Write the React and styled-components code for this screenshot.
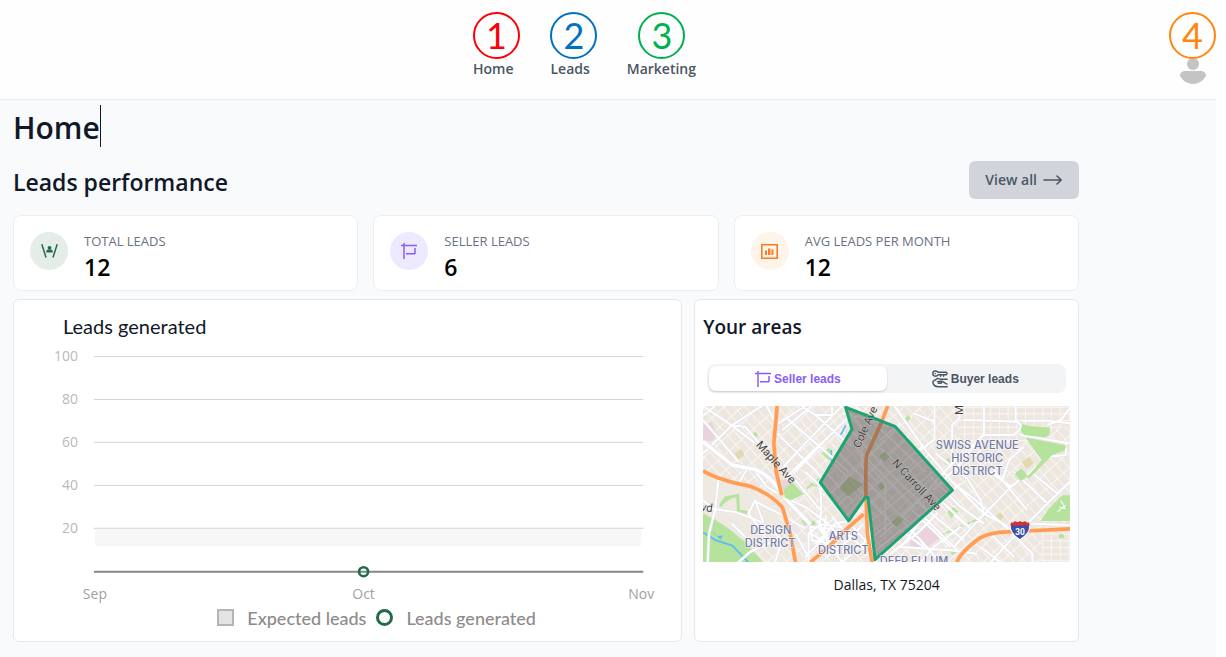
import React, { useState } from "react";
import styled, { createGlobalStyle } from "styled-components";

const GlobalStyle = createGlobalStyle`
  * {
    box-sizing: border-box;
  }
  body {
    margin: 0;
    background-color: #fff;
    font-family: "Open Sans", "Noto Sans", sans-serif;
    color: #111827;
  }
  h1, h2, h3, p, dl, dt, dd {
    margin: 0;
  }
  button {
    border: 0;
    cursor: pointer;
  }
`;

const Page = styled.div`
  min-height: 100vh;
  margin-right: 10px;
  background-color: #f9fafc;
`;

const Header = styled.header`
  display: flex;
  height: 100px;
  padding-top: 59px;
  background-color: #fefefe;
  border-bottom: 1px solid #eeeeee;
`;
const Nav = styled.nav`
  display: flex;
  flex: 1;
  justify-content: center;
  align-items: flex-start;
  gap: 37px;
`;
const NavLink = styled.a`
  position: relative;
  color: #4b5563;
  font-size: 14px;
  font-weight: 600;
  line-height: 20px;
  text-decoration: none;
`;
const Step = styled.span`
  position: absolute;
  bottom: 100%;
  left: ${(props) => (props.$centered ? "calc(50% - 23px)" : "0")};
  width: 47px;
  height: 47px;
  border: 2px solid ${(props) => props.$color};
  border-radius: 50%;
  color: ${(props) => props.$color};
  font-family: Lato, sans-serif;
  font-size: 36px;
  font-weight: 400;
  line-height: 43px;
  text-align: center;
`;
const Account = styled.a`
  position: relative;
  width: 47px;

  & svg {
    display: block;
    margin: 0 auto;
  }
`;

const Main = styled.main`
  padding: 5px 137px 15px 13px;
`;
const Title = styled.h1`
  width: fit-content;
  padding-top: 3px;
  border-right: 1px solid #111827;
  font-size: 30px;
  font-weight: 600;
  line-height: 39px;
`;
const SectionHead = styled.div`
  display: flex;
  justify-content: space-between;
  align-items: center;
  margin: 14px 0 16px;
`;
const SectionTitle = styled.h2`
  padding-top: 3px;
  font-size: 23px;
  font-weight: 600;
  line-height: 32px;
`;
const ViewAll = styled.button`
  display: flex;
  align-items: center;
  gap: 6px;
  height: 38px;
  padding: 0 16px 2px;
  border-radius: 6px;
  background-color: #d1d5db;
  color: #4b5563;
  font-family: inherit;
  font-size: 14px;
  font-weight: 600;
`;

const Stats = styled.dl`
  display: grid;
  grid-template-columns: repeat(3, minmax(0, 1fr));
  gap: 15px;
`;
const StatCard = styled.div`
  display: flex;
  gap: 16px;
  height: 76px;
  padding: 16px;
  border: 1px solid #eceef1;
  border-radius: 8px;
  background-color: #fff;
`;
const StatIcon = styled.span`
  display: flex;
  align-items: center;
  justify-content: center;
  width: 38px;
  height: 38px;
  border-radius: 50%;
  background-color: ${(props) => props.$tint};
`;
const StatLabel = styled.dt`
  color: #6b7280;
  font-size: 13px;
  font-weight: 500;
  line-height: 19px;
  text-transform: uppercase;
`;
const StatValue = styled.dd`
  color: #000;
  font-size: 23px;
  font-weight: 600;
  line-height: 32px;
`;

const Panels = styled.div`
  display: grid;
  grid-template-columns: minmax(0, 40fr) minmax(0, 23fr);
  gap: 12px;
  margin-top: 8px;
`;
const Panel = styled.section`
  padding: 13px 0 11px;
  border: 1px solid #e5e7eb;
  border-radius: 6px;
  background-color: #fff;
`;
const ChartTitle = styled.h3`
  padding-left: 49px;
  font-family: Lato, sans-serif;
  font-size: 20px;
  font-weight: 400;
  line-height: 27px;
`;
const Chart = styled.svg`
  display: block;
  width: 100%;
  font-family: "Open Sans", sans-serif;
  font-size: 14px;
`;
const Legend = styled.div`
  display: flex;
  justify-content: center;
  gap: 10px;
  padding-left: 58px;
  color: #8e8a8a;
  font-family: Lato, sans-serif;
  font-size: 18px;
  font-weight: 500;
  line-height: 24px;
`;
const LegendItem = styled.span`
  display: flex;
  align-items: center;
  gap: 13px;
`;
const LegendSquare = styled.i`
  width: 17px;
  height: 17px;
  border: 2px solid #b5b5b5;
  background-color: #e4e4e4;
`;
const LegendRing = styled.i`
  width: 17px;
  height: 17px;
  border: 3px solid #226b4a;
  border-radius: 50%;
`;

const AreasPanel = styled(Panel)`
  padding-left: 8px;
  padding-right: 8px;
`;
const AreasTitle = styled.h3`
  font-size: 19px;
  font-weight: 600;
  line-height: 28px;
`;
const Tabs = styled.div`
  display: grid;
  grid-template-columns: 1fr 1fr;
  height: 29px;
  margin: 23px 4px 13px;
  padding: 2px;
  border-radius: 8px;
  background-color: #f3f4f6;
`;
const Tab = styled.button`
  display: flex;
  align-items: center;
  justify-content: center;
  gap: 3px;
  padding: 0;
  border-radius: 7px;
  background-color: ${(props) => (props.$active ? "#fff" : "transparent")};
  box-shadow: ${(props) =>
    props.$active ? "0 1px 2px rgba(0, 0, 0, 0.18)" : "none"};
  color: ${(props) => (props.$active ? "#8b5cf6" : "#4b5563")};
  font-family: "Liberation Sans", Arial, sans-serif;
  font-size: 12px;
  font-weight: 700;
`;
const Map = styled.svg`
  display: block;
  width: 100%;
  font-family: Roboto, sans-serif;
`;
const Caption = styled.p`
  margin-top: 13px;
  font-size: 14px;
  line-height: 20px;
  text-align: center;
`;

const SignIcon = () => (
  <svg width="16" height="16" viewBox="0 0 16 16" fill="none" stroke="#8b5cf6" strokeWidth="1.5">
    <path d="M3 0v16M0 2.6h16M14 5v6M14 10.8H5" />
  </svg>
);

const PeopleIcon = () => (
  <svg width="17" height="16" viewBox="0 0 17 16" fill="#226b4a">
    <path d="M.8 1.2l4.2 13.2M16.2 1.2L12 14.4" stroke="#226b4a" strokeWidth="1.5" />
    <circle cx="8.5" cy="4.8" r="1.9" />
    <path d="M5.3 9.4V7.6l1.6-1h3.2l1.6 1v1.8z" />
  </svg>
);

const ReportIcon = () => (
  <svg width="17" height="15" viewBox="0 0 17 15" fill="#f97b22">
    <path d="M.8.8h15.4v13.4H.8z" fill="none" stroke="#f97b22" strokeWidth="1.6" />
    <path d="M4 6.5h2V11H4zM7 4.5h2.4V11H7zM10.4 5.5h2V11h-2z" />
  </svg>
);

const KeyIcon = () => (
  <svg width="16" height="18" viewBox="0 0 16 18" fill="none" stroke="#4b5563" strokeWidth="1.4" strokeLinecap="round" strokeLinejoin="round">
    <path d="M6 2.2C5.2 1.4 4.4 1 3.4 1 1.8 1 .8 2.2.8 3.6s1 2.6 2.6 2.6c1 0 2-.4 2.6-1.4h8.2l1-1.2-1-1.4z" />
    <path d="M3.2 3.6h.3M8.6 5v1.2M11.6 5v1.2" />
    <path d="M15.2 9.2H8.4L5.6 8.4 1 11.4v2.2c1 1.8 2.6 3.2 4.8 3.2h9.4" />
    <path d="M5.4 11.6l3.4-.4c1.2.2 1.4 1.6.2 2H6.2M9.6 11.2c2 .2 3.4 2.6 5.4 2.8" />
  </svg>
);

const ArrowIcon = () => (
  <svg width="20" height="12" viewBox="0 0 20 12" fill="none" stroke="#4b5563" strokeWidth="1.6" strokeLinecap="round" strokeLinejoin="round">
    <path d="M1 7h17M14 3l4.2 4L14 11" />
  </svg>
);

const navItems = [
  { label: "Home", step: 1, color: "#fb0007" },
  { label: "Leads", step: 2, color: "#0070c0" },
  { label: "Marketing", step: 3, color: "#00b050", centered: true },
];

const stats = [
  { label: "Total leads", value: 12, tint: "#e4ede7", icon: <PeopleIcon /> },
  { label: "Seller leads", value: 6, tint: "#ede9fe", icon: <SignIcon /> },
  { label: "Avg leads per month", value: 12, tint: "#fff4ea", icon: <ReportIcon /> },
];

const gridLines = [
  { value: 100, y: 16 },
  { value: 80, y: 59 },
  { value: 60, y: 102 },
  { value: 40, y: 145 },
  { value: 20, y: 188 },
];

const months = [
  { name: "Sep", x: 81 },
  { name: "Oct", x: 350 },
  { name: "Nov", x: 628 },
];

const LeadsChart = () => (
  <Chart viewBox="0 0 668 266" role="img" aria-label="Leads generated by month">
    <rect x="81" y="189" width="547" height="17" fill="#f7f7f7" />
    {gridLines.map((line) => (
      <g key={line.value}>
        <path d={`M80 ${line.y + 0.5}H630`} stroke="#d3d3d3" />
        <text x="64" y={line.y + 5} textAnchor="end" fill="#b9b9b9">
          {line.value}
        </text>
      </g>
    ))}
    <path d="M80 232H630" stroke="#868686" strokeWidth="2" />
    <circle cx="350" cy="232" r="4.5" fill="none" stroke="#226b4a" strokeWidth="2.6" />
    {months.map((month) => (
      <text key={month.name} x={month.x} y="259" textAnchor="middle" fill="#a3a0a0">
        {month.name}
      </text>
    ))}
  </Chart>
);

// west half of the street network
const westStreets = `
  M200 18L110 76L40 145L24 160M24 18L110 76L150 80L195 132L215 140
  M60 18L24 48M110 76L180 130M215 18L236 60M24 60L50 90L130 185
  M70 240L60 330L42 400L38 486M24 322L120 335L205 368M60 330L24 300
  M178 302L255 342L330 385M205 368L180 300L160 340L185 372L215 420
  M250 70L330 18M245 100L360 210L378 232M275 55L460 215M318 18L360 45L410 45V18
  M262 90L350 18M360 45L470 140M440 18L330 130L265 200M470 40L390 120L300 215
  M270 235L340 165L400 110M300 240L375 330M330 215L400 280M375 247L378 330L372 385
  M265 290L330 320L400 370M340 486V400L375 372L435 380M372 385L410 440L440 486
  M350 400L430 460M360 430L420 370L460 362M330 470L400 400M392 345L384 420
  M345 380L410 385L430 410L410 430L350 420ZM365 360L415 445M300 400L345 480
  M130 486L165 455L240 420M240 486L260 420L215 375M110 370L160 420M430 330L490 400L520 430
  M410 350L455 400L510 450M395 470L460 420L500 375M440 486L515 420M160 200L130 250L70 240
  M180 212L215 260L250 280
`;
const centreStreets = `
  M470 95L560 195L690 320M455 115L545 205L660 325M430 160L600 330L650 375
  M395 220L470 300M415 190L600 380M405 280L480 210L560 130L600 90
  M430 315L520 220L640 110M455 345L520 270L680 140M515 320L700 165
  M518 370L725 205M525 415L750 235M535 455L770 270M470 45L540 130L620 200L735 305
  M480 18L600 130L690 215M440 40L530 60L580 80M500 120V200L540 240M480 150L570 250V400
`;
// east half, drawn in its own coordinate space
const eastStreets = `
  M42 18L75 65L135 150L215 245L285 300L420 420M162 18V118M310 18V100L240 190L160 270
  M405 18V60L425 80L400 105H310L215 190M425 80L410 65L340 62L250 60M420 105L540 125L567 130
  M162 65L100 40M162 118L120 150M237 18V55L215 75V190L110 305L60 355L0 410
  M567 25L540 60L500 75M425 62H500L567 70M555 130V165L500 170L450 215L390 260L270 385L220 440
  M365 240L385 180L430 140M215 245L310 340L300 300L260 235L165 160M310 340L375 375L410 415L455 460V486
  M567 245L510 300L440 370L380 430L330 486M440 370L567 375M400 215L500 310M450 215L530 280
  M340 210L440 330M390 260L330 215M270 385L180 300L130 350L230 450M180 300L240 250
  M60 355L120 420L180 486M90 325L210 440M110 305L250 420M0 440L60 390L130 440
  M30 460L110 400L170 340M270 385L220 345M300 440L360 486M330 400L400 470
  M150 230L240 320L310 370M240 380L160 440L120 486M60 440L210 450L290 460M0 120L60 70M130 350L70 430
`;

const AreaMap = () => (
  <Map viewBox="24 18 1098 468" role="img" aria-label="Map of Dallas, TX 75204">
    <defs>
      <pattern id="blocks" width="24" height="36" patternUnits="userSpaceOnUse" patternTransform="rotate(-42)">
        <path d="M0 1H24M1 0V36" stroke="#faf8f5" strokeWidth="3" fill="none" />
      </pattern>
      <pattern id="avenues" width="26" height="20" patternUnits="userSpaceOnUse">
        <path d="M0 1H26M1 0V20" stroke="#faf8f5" strokeWidth="3" fill="none" />
      </pattern>
    </defs>
    <rect x="24" y="18" width="1098" height="468" fill="#ede7df" />
    <rect x="24" y="18" width="1098" height="468" fill="url(#blocks)" />
    <path d="M792 18H1125V70L990 125H792zM1035 400H1125V486H1035z" fill="#ede7df" />
    <path d="M792 18H1125V70L990 125H792zM1035 400H1125V486H1035z" fill="url(#avenues)" />
    <path d="M24 225L160 262L240 320L270 400L180 440L24 330z" fill="#eee9e1" />

    <g fill="#b5e39c">
      <path d="M24 340L60 358L100 385L150 425L205 486H24z" />
      <path d="M172 102l8-8 9 12-9 8zM380 160l22-18 12 30-14 8zM318 362l12-8 12 14-12 8zM345 365l12-6 5 12-10 6z" />
      <path d="M1100 285H1125V362H1035L1060 325z" />
      <path d="M755 335l18-15 15 14-20 20zM746 185l14-12 5 14-14 8zM626 62l10-17 9 8-9 14zM1090 402h14v12h-14zM763 452l12-6 8 12-12 6z" />
    </g>
    <path d="M76 318L92 293L128 286L130 330L158 338M105 292L78 310" fill="none" stroke="#b5e39c" strokeWidth="9" />
    <path d="M335 265L372 235M345 250L365 258M700 420L875 345" fill="none" stroke="#b5e39c" strokeWidth="5" strokeDasharray="24 4" />
    <g fill="#ead3dc">
      <path d="M24 75L50 66L66 100L50 125L24 118zM250 248L272 235L284 250L262 272z" />
      <path d="M640 412L688 374L735 412L685 450L645 440z" />
    </g>
    <path d="M118 160l20-15 10 18-18 16zM278 140l10-6 8 8-10 8zM900 348l14-12 12 14-14 12z" fill="#e3d9b0" />
    <g fill="none" stroke="#62bff0">
      <path d="M24 396L62 420L112 436L160 486" strokeWidth="6" />
      <path d="M54 394L66 408L84 406L76 418z" fill="#62bff0" />
      <path d="M452 75L436 104M408 150V182" strokeWidth="5" />
    </g>

    <g fill="none" strokeLinejoin="round">
      <g stroke="#dfe0ed" strokeWidth="9">
        <path d={westStreets} />
        <path d={eastStreets} transform="translate(555 0)" />
      </g>
      <g stroke="#fff" strokeWidth="6">
        <path d={westStreets} />
        <path d={centreStreets} strokeWidth="4" />
        <path d={eastStreets} transform="translate(555 0)" />
      </g>
      <path d="M24 125L112 195L180 208Q235 232 262 285L345 372" stroke="#dfe0ed" strokeWidth="15" />
      <path d="M24 125L112 195L180 208Q235 232 262 285L345 372" stroke="#fff" strokeWidth="11" />
    </g>

    {/* parks that sit over the street grid */}
    <g fill="#b5e39c">
      <path d="M265 268L290 245L325 282L285 300L268 292z" />
      <path d="M980 72L1000 78L1062 82V105L1045 112L985 105L975 90z" />
      <path d="M990 112L1112 136L1106 152L1070 164L1045 190L1000 235L995 230L1038 180z" />
      <path d="M957 220L978 205L997 228L975 243z" />
    </g>
    <path d="M978 185l22-16 15 20-22 18z" fill="#e3d9b0" />

    <g fill="none" strokeLinejoin="round">
      <path d="M1110 315L1085 335M1095 300L1108 325L1090 320" stroke="#fff" strokeWidth="3" />
      <g stroke="#ffe3c8" strokeWidth="14">
        <path d="M246 18L236 130L243 215L262 292M24 212Q70 240 165 258Q225 280 262 322L285 400L301 486" />
        <path d="M345 486L400 440L455 385L510 340M784 486Q795 455 855 412Q885 396 935 395L1125 386" />
      </g>
      <g stroke="#ff9d57" strokeWidth="11">
        <path d="M246 18L236 130L243 215L260 285M24 212Q70 240 165 258Q225 280 262 322L285 400L301 486" />
        <path d="M345 486L400 440L455 385L505 342M784 486Q795 455 855 412Q885 396 935 395L1125 386" />
        <path d="M577 18L555 75L514 165Q510 180 512 290L516 400L530 486" />
      </g>
    </g>

    <path
      d="M451 22L555 62L600 80L771 270L539 478L518 292H509L460 362L375 247L470 88z"
      fill="rgba(80, 76, 76, 0.48)"
      stroke="#1ca474"
      strokeWidth="9"
      strokeLinejoin="round"
    />
    <g fill="#6f8a55" opacity="0.5">
      <path d="M432 265L462 228L502 252L458 290zM553 168l16-14 14 16-18 16zM587 366l22-20 16 14-22 20zM548 255l10-8 10 16-12 6z" />
    </g>

    <g fill="#3f3f42" fontSize="34" textAnchor="middle" stroke="#fff" strokeWidth="1" paintOrder="stroke">
      <text transform="translate(234 194) rotate(48)">Maple Ave</text>
      <text transform="translate(520 86) rotate(-66)">Cole Ave</text>
      <text transform="translate(655 262) rotate(47)">N Carroll Ave</text>
      <text transform="translate(802 30) rotate(-90)">M</text>
      <text transform="translate(34 333) rotate(8)">vd</text>
    </g>
    <g fill="#7279a4" fontFamily="Inter, sans-serif" fontSize="33" fontWeight="500" textAnchor="middle" stroke="#fff" strokeWidth="3" paintOrder="stroke">
      <text x="227" y="400">DESIGN</text>
      <text x="225" y="440">DISTRICT</text>
      <text x="444" y="420">ARTS</text>
      <text x="444" y="460">DISTRICT</text>
      <text x="845" y="147">SWISS AVENUE</text>
      <text x="845" y="187">HISTORIC</text>
      <text x="845" y="226">DISTRICT</text>
      <text x="656" y="495">DEEP ELLUM</text>
    </g>
    <g>
      <path d="M946 366Q954 368 958 362Q966 368 973 362Q981 368 988 362Q992 368 1000 366Q1010 396 973 418Q936 396 946 366z" fill="#3b4fa8" stroke="#fff" strokeWidth="3" />
      <path d="M946 366Q954 368 958 362Q966 368 973 362Q981 368 988 362Q992 368 1000 366L1002 376H944z" fill="#d13337" />
      <text x="973" y="403" fill="#fff" fontSize="25" fontWeight="700" textAnchor="middle">
        30
      </text>
    </g>
  </Map>
);

const App = () => {
  const [tab, setTab] = useState("seller");

  return (
    <React.Fragment>
      <GlobalStyle />
      <Page>
        <Header>
          <Nav>
            {navItems.map((item) => (
              <NavLink key={item.label} href={`#${item.label.toLowerCase()}`}>
                <Step $color={item.color} $centered={item.centered}>
                  {item.step}
                </Step>
                {item.label}
              </NavLink>
            ))}
          </Nav>
          <Account href="#account" aria-label="Account">
            <Step $color="#ff870f">4</Step>
            <svg width="28" height="26" viewBox="0 0 28 26" fill="#c4c4c4">
              <circle cx="14" cy="5" r="6" />
              <path d="M5 12H23Q27 13 27 17Q22 25 14 25Q6 25 1 17Q1 13 5 12z" />
            </svg>
          </Account>
        </Header>
        <Main>
          <Title>Home</Title>
          <SectionHead>
            <SectionTitle>Leads performance</SectionTitle>
            <ViewAll type="button">
              View all
              <ArrowIcon />
            </ViewAll>
          </SectionHead>
          <Stats>
            {stats.map((stat) => (
              <StatCard key={stat.label}>
                <StatIcon $tint={stat.tint}>{stat.icon}</StatIcon>
                <div>
                  <StatLabel>{stat.label}</StatLabel>
                  <StatValue>{stat.value}</StatValue>
                </div>
              </StatCard>
            ))}
          </Stats>
          <Panels>
            <Panel>
              <ChartTitle>Leads generated</ChartTitle>
              <LeadsChart />
              <Legend>
                <LegendItem>
                  <LegendSquare />
                  Expected leads
                </LegendItem>
                <LegendItem>
                  <LegendRing />
                  Leads generated
                </LegendItem>
              </Legend>
            </Panel>
            <AreasPanel>
              <AreasTitle>Your areas</AreasTitle>
              <Tabs role="tablist">
                <Tab type="button" role="tab" aria-selected={tab === "seller"} $active={tab === "seller"} onClick={() => setTab("seller")}>
                  <SignIcon />
                  Seller leads
                </Tab>
                <Tab type="button" role="tab" aria-selected={tab === "buyer"} $active={tab === "buyer"} onClick={() => setTab("buyer")}>
                  <KeyIcon />
                  Buyer leads
                </Tab>
              </Tabs>
              <AreaMap />
              <Caption>Dallas, TX 75204</Caption>
            </AreasPanel>
          </Panels>
        </Main>
      </Page>
    </React.Fragment>
  );
};

export default App;
